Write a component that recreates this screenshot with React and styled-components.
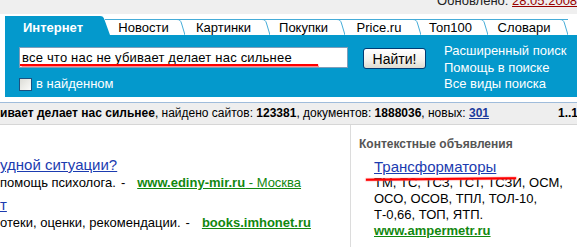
import { Fragment } from "react";
import styled, { createGlobalStyle } from "styled-components";

const BLUE = "#0499cc";
const TAB_LINE = "#45acd8";
const LINK = "#1b3bb0";
const GREEN = "#12880f";

const GlobalStyle = createGlobalStyle`
  body {
    margin: 0;
    background: #fff;
    font-family: "Liberation Sans", Arial, sans-serif;
    font-size: 13px;
    color: #000;
    overflow: hidden;
  }
`;

const TopBar = styled.div`
  height: 14px;
  margin-bottom: 2px;
  padding-left: 437px;
  background: #efefef;
  overflow: hidden;
  white-space: nowrap;
  font-size: 13px;
  line-height: 16px;
`;

const Updated = styled.div`
  margin-top: -7px;
  color: #222;
`;

const DateLink = styled.a`
  color: #990000;
  text-decoration: underline;
`;

const TabRow = styled.div`
  display: flex;
  align-items: flex-end;
  height: 19px;
  padding-left: 5px;
  white-space: nowrap;
`;

const ActiveTab = styled.div`
  box-sizing: border-box;
  width: 95px;
  height: 19px;
  padding: 5px 0 0 18px;
  background: ${BLUE};
  color: #fff;
  font-weight: bold;
  line-height: 14px;
`;

const Tab = styled.div`
  box-sizing: border-box;
  width: ${({ $w }) => $w}px;
  height: 16px;
  padding-top: 1px;
  border-top: 1px solid ${TAB_LINE};
  text-align: center;
  line-height: 14px;
`;

const Corner = styled.svg`
  display: block;
  flex: none;
`;

const Panel = styled.div`
  box-sizing: border-box;
  display: flex;
  align-items: flex-start;
  height: 62px;
  margin-left: 5px;
  padding: 12px 0 0 14px;
  background: ${BLUE};
`;

const SearchCol = styled.div`
  display: flex;
  flex-direction: column;
  width: 329px;
`;

const Field = styled.div`
  position: relative;
  box-sizing: border-box;
  height: 21px;
  border: 1px solid #7f9db9;
  background: #fff;
`;

const Input = styled.input`
  box-sizing: border-box;
  width: 100%;
  height: 100%;
  padding: 0 2px;
  border: none;
  outline: none;
  background: transparent;
  font-family: inherit;
  font-size: 13px;
  letter-spacing: 0.2px;
  color: #000;
`;

const RedMark = styled.span`
  position: absolute;
  left: ${({ $left }) => $left}px;
  top: ${({ $top }) => $top}px;
  width: ${({ $width }) => $width}px;
  height: 2px;
  background: #f00;
  box-shadow: 0 0 1px 0.5px rgba(255, 90, 90, 0.7);
  transform: rotate(${({ $tilt }) => $tilt || 0}deg);
  pointer-events: none;
`;

const CheckRow = styled.label`
  display: flex;
  align-items: center;
  gap: 4px;
  margin-top: 9px;
  color: #fff;
  line-height: 14px;
`;

const Check = styled.span`
  box-sizing: border-box;
  width: 13px;
  height: 13px;
  border: 1px solid #1c5180;
  background: linear-gradient(135deg, #dcdcd6, #fbfbf9);
`;

const Button = styled.button`
  box-sizing: border-box;
  width: 63px;
  height: 21px;
  margin: 1px 0 0 15px;
  padding: 0;
  border: 1px solid #003c74;
  border-radius: 3px;
  background: linear-gradient(#ffffff, #f3f2ec 60%, #dedbd0);
  font-family: inherit;
  font-size: 14px;
  color: #000;
`;

const Links = styled.div`
  display: flex;
  flex-direction: column;
  margin: -4px 0 0 18px;
  white-space: nowrap;
  line-height: 16.5px;

  a {
    color: #fff;
    text-decoration: none;
  }
`;

const Status = styled.div`
  height: 21px;
  margin-top: 5px;
  border-top: 1px solid #9fbcdb;
  border-bottom: 1px solid #d6d6d6;
  background: #eeeeee;
  font-size: 12px;
  line-height: 21px;
  white-space: nowrap;
  overflow: hidden;

  b {
    font-weight: bold;
  }
`;

const New = styled.a`
  color: #1a3a9c;
  font-weight: bold;
  text-decoration: underline;
`;

const Pages = styled.b`
  margin-left: 69px;
`;

const Body = styled.div`
  display: grid;
  grid-template-columns: 351px 1fr;
  height: 130px;
`;

const Results = styled.div`
  padding-top: 31px;
  border-right: 1px solid #dcdcdc;
  white-space: nowrap;
  overflow: hidden;
`;

const Result = styled.div`
  margin-bottom: 4px;
`;

const Title = styled.a`
  display: block;
  color: ${LINK};
  font-size: 15px;
  line-height: 18px;
  text-decoration: underline;
`;

const Snippet = styled.div`
  line-height: 18px;
`;

const Sep = styled.span`
  margin: 0 12px 0 5px;
`;

const Url = styled.a`
  color: ${GREEN};
  text-decoration: underline;

  b {
    font-weight: bold;
  }
`;

const Ads = styled.div`
  padding: 12px 0 0 8px;
`;

const AdsHead = styled.div`
  color: #555;
  font-size: 12px;
  font-weight: bold;
  line-height: 14px;
`;

const Ad = styled.div`
  position: relative;
  margin: 7px 0 0 15px;
`;

const AdTitle = styled.a`
  display: block;
  color: ${LINK};
  font-size: 15px;
  line-height: 17px;
  text-decoration: underline;
`;

const AdText = styled.div`
  line-height: 16px;
`;

const AdUrl = styled(Url)`
  display: block;
  font-weight: bold;
  line-height: 16px;
`;

const tabs = [
  { label: "Новости", w: 67 },
  { label: "Картинки", w: 77 },
  { label: "Покупки", w: 67 },
  { label: "Price.ru", w: 68 },
  { label: "Топ100", w: 59 },
  { label: "Словари", w: 72 },
];

function TabCorner() {
  return (
    <Corner width="8" height="16" viewBox="0 0 8 16">
      <path d="M0 0.5 H8" stroke={TAB_LINE} strokeWidth="1" fill="none" />
      <path d="M0 0.5 C2.5 0.5 3.6 1.6 4.4 4 L8 16" stroke={TAB_LINE} strokeWidth="1" fill="none" />
    </Corner>
  );
}

function ActiveCorner() {
  return (
    <Corner width="10" height="19" viewBox="0 0 10 19">
      <path d="M0 0 C2.5 0 3.6 1 4.4 3.5 L10 19 H0 Z" fill={BLUE} />
      <path d="M5 3.5 H10" stroke={TAB_LINE} strokeWidth="1" fill="none" />
    </Corner>
  );
}

export default function App() {
  return (
    <>
      <GlobalStyle />
      <TopBar>
        <Updated>
          Обновлено: <DateLink>28.05.2008 21:05</DateLink>
        </Updated>
      </TopBar>

      <TabRow>
        <ActiveTab>Интернет</ActiveTab>
        <ActiveCorner />
        {tabs.map((t) => (
          <Fragment key={t.label}>
            <Tab $w={t.w}>{t.label}</Tab>
            <TabCorner />
          </Fragment>
        ))}
      </TabRow>

      <Panel>
        <SearchCol>
          <Field>
            <Input readOnly value="все что нас не убивает делает нас сильнее" />
            <RedMark $left={0} $top={16} $width={298} />
          </Field>
          <CheckRow>
            <Check />в найденном
          </CheckRow>
        </SearchCol>
        <Button>Найти!</Button>
        <Links>
          <a>Расширенный поиск</a>
          <a>Помощь в поиске</a>
          <a>Все виды поиска</a>
        </Links>
      </Panel>

      <Status>
        <b>ивает делает нас сильнее</b>, найдено сайтов: <b>123381</b>, документов:{" "}
        <b>1888036</b>, новых: <New>301</New>
        <Pages>1..15</Pages>
      </Status>

      <Body>
        <Results>
          <Result>
            <Title>удной ситуации?</Title>
            <Snippet>
              помощь психолога.<Sep>-</Sep>
              <Url>
                <b>www.ediny-mir.ru</b> - Москва
              </Url>
            </Snippet>
          </Result>
          <Result>
            <Title>т</Title>
            <Snippet>
              отеки, оценки, рекомендации.<Sep>-</Sep>
              <Url>
                <b>books.imhonet.ru</b>
              </Url>
            </Snippet>
          </Result>
        </Results>

        <Ads>
          <AdsHead>Контекстные объявления</AdsHead>
          <Ad>
            <AdTitle>Трансформаторы</AdTitle>
            <AdText>
              ТМ, ТС, ТСЗ, ТСТ, ТСЗИ, ОСМ,
              <br />
              ОСО, ОСОВ, ТПЛ, ТОЛ-10,
              <br />
              Т-0,66, ТОП, ЯТП.
            </AdText>
            <AdUrl>www.ampermetr.ru</AdUrl>
            <RedMark $left={-8} $top={20} $width={150} $tilt={-0.6} />
          </Ad>
        </Ads>
      </Body>
    </>
  );
}
